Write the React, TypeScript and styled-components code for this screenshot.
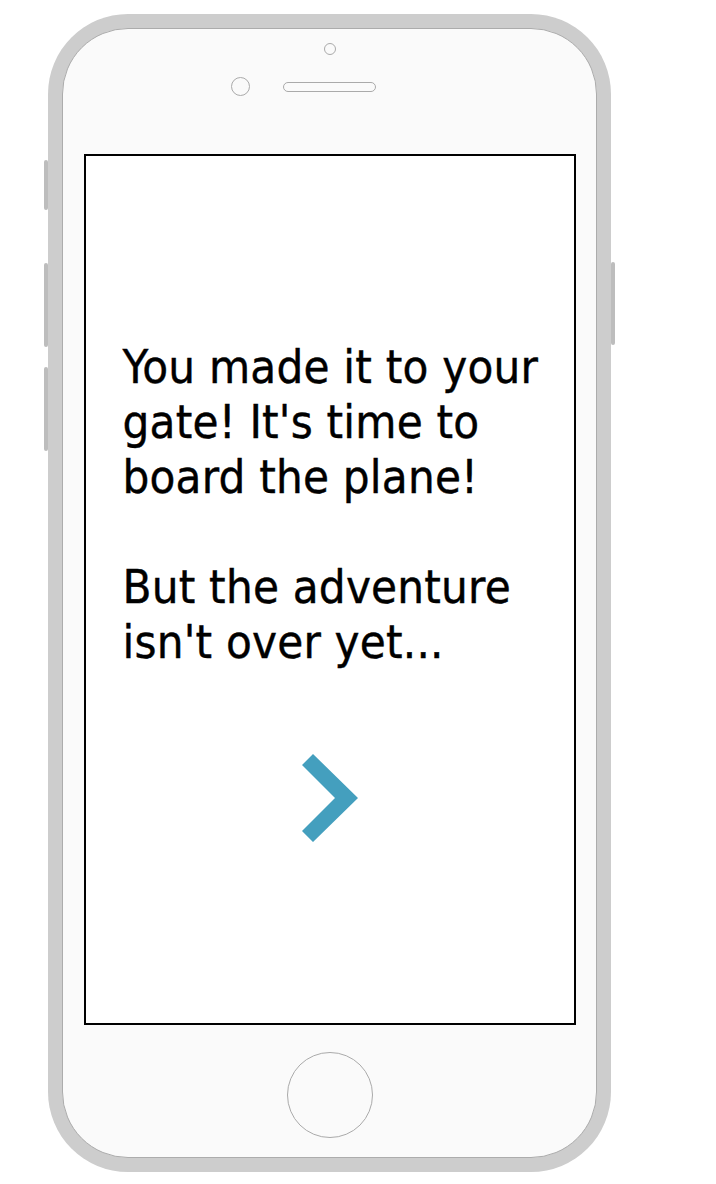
import { createGlobalStyle, styled } from 'styled-components';

const GlobalStyle = createGlobalStyle`
  html, body {
    margin: 0;
    background: #ffffff;
  }
`;

export default function App() {
  return (
    <>
      <GlobalStyle />
      <Page>
        <Phone>
          <LeftRail>
            <SideKey $height={50} />
            <SideKey $height={84} $gap={53} />
            <SideKey $height={84} $gap={20} />
          </LeftRail>
          <Frame>
            <Face>
              <Sensor />
              <EarRow>
                <Camera />
                <Speaker />
              </EarRow>
              <Screen>
                <Message>
                  You made it to your
                  <br />
                  gate! It's time to
                  <br />
                  board the plane!
                </Message>
                <Message>
                  But the adventure
                  <br />
                  isn't over yet...
                </Message>
                <NextButton aria-label="Next">
                  <svg width="56" height="88" viewBox="0 0 56 88">
                    <polygon points="11,0 56,44 11,88 0,77 33,44 0,11" fill="#449fbe" />
                  </svg>
                </NextButton>
              </Screen>
              <HomeButton />
            </Face>
          </Frame>
          <RightRail>
            <SideKey $height={83} />
          </RightRail>
        </Phone>
      </Page>
    </>
  );
}

const Page = styled.div`
  padding: 14px 0 0 44px;
`;

const Phone = styled.div`
  display: flex;
  align-items: flex-start;
`;

const LeftRail = styled.div`
  display: flex;
  flex-direction: column;
  width: 4px;
  padding-top: 146px;
`;

const RightRail = styled.div`
  display: flex;
  flex-direction: column;
  width: 4px;
  padding-top: 248px;
`;

const SideKey = styled.div<{ $height: number; $gap?: number }>`
  height: ${({ $height }) => $height}px;
  margin-top: ${({ $gap }) => $gap ?? 0}px;
  background: #bdbdbd;
  border-radius: 2px;
`;

const Frame = styled.div`
  box-sizing: border-box;
  width: 563px;
  height: 1158px;
  padding: 14px;
  background: #cdcdcd;
  border-radius: 80px;
`;

const Face = styled.div`
  box-sizing: border-box;
  height: 100%;
  display: flex;
  flex-direction: column;
  align-items: center;
  background: #fafafa;
  border: 1.5px solid #acacac;
  border-radius: 66px;
`;

const Sensor = styled.div`
  box-sizing: border-box;
  width: 12px;
  height: 12px;
  margin-top: 14px;
  margin-left: 1px;
  border: 1.5px solid #aaaaaa;
  border-radius: 50%;
`;

const EarRow = styled.div`
  display: grid;
  grid-template-columns: 1fr auto 1fr;
  align-items: center;
  width: 100%;
  margin-top: 22px;
`;

const Camera = styled.div`
  box-sizing: border-box;
  justify-self: end;
  width: 19px;
  height: 19px;
  margin-right: 33px;
  border: 1.5px solid #aaaaaa;
  border-radius: 50%;
`;

const Speaker = styled.div`
  box-sizing: border-box;
  width: 93px;
  height: 10px;
  border: 1.5px solid #aaaaaa;
  border-radius: 5px;
`;

const Screen = styled.div`
  box-sizing: border-box;
  display: flex;
  flex-direction: column;
  width: 492px;
  height: 871px;
  margin-top: 58px;
  padding: 183px 10px 0 37px;
  background: #ffffff;
  border: 2px solid #000000;
`;

const Message = styled.p`
  margin: 0 0 55px;
  font-family: Tahoma, 'DejaVu Sans Condensed', 'DejaVu Sans', sans-serif;
  font-size: 47px;
  line-height: 55px;
  letter-spacing: 0.2px;
  color: #000000;
  -webkit-text-stroke: 0.4px #000000;
  white-space: nowrap;
`;

const NextButton = styled.div`
  display: flex;
  justify-content: center;
  margin: 30px 0 0 -37px;
  padding-left: 10px;
`;

const HomeButton = styled.div`
  box-sizing: border-box;
  width: 86px;
  height: 86px;
  margin-top: 27px;
  border: 1.5px solid #aaaaaa;
  border-radius: 50%;
`;
